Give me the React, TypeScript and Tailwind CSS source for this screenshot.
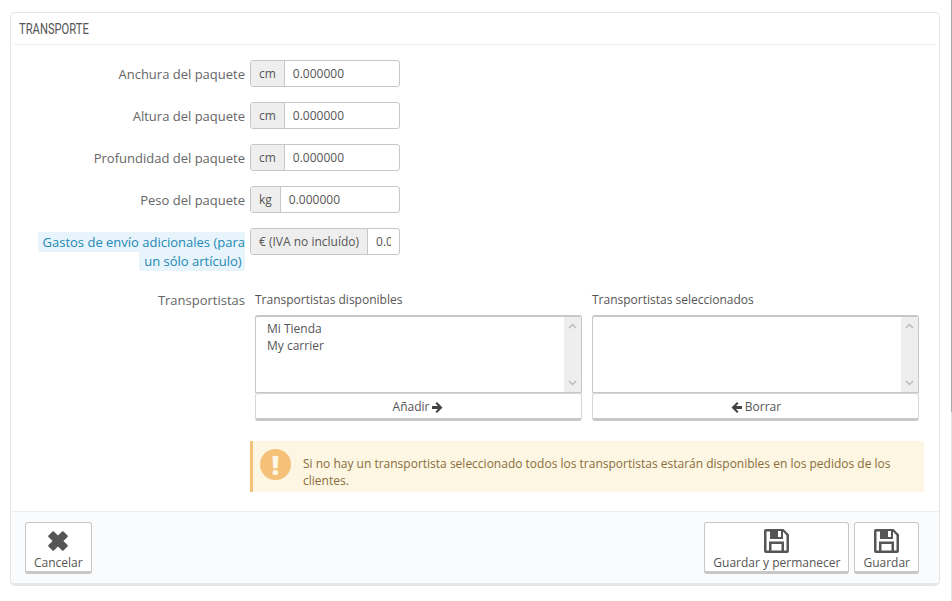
import type { ReactNode } from 'react';

function Floppy() {
    return (
        <svg width="25" height="24" viewBox="0 0 25 24">
            <path
                fillRule="evenodd"
                fill="#555"
                d="M2 0h17.500L25 5.500V22a2 2 0 0 1-2 2H2a2 2 0 0 1-2-2V2a2 2 0 0 1 2-2zM2.500 2.500v19h2.500v-9h15v9h2.500V6.500l-3-3.500H19v7H6V2.500H2.500zM14 2v6h3V2h-3zM7.500 15v6.500h10V15h-10z"
            />
        </svg>
    );
}

function Cross() {
    return (
        <svg width="20" height="20" viewBox="0 0 20 20">
            <path
                fill="#555"
                d="M4.500.5a1 1 0 0 1 1.400 0L10 4.600 14.100.5a1 1 0 0 1 1.400 0l4 4a1 1 0 0 1 0 1.400L15.400 10l4.100 4.100a1 1 0 0 1 0 1.400l-4 4a1 1 0 0 1-1.400 0L10 15.400l-4.100 4.100a1 1 0 0 1-1.400 0l-4-4a1 1 0 0 1 0-1.400L4.600 10 .5 5.900a1 1 0 0 1 0-1.400z"
            />
        </svg>
    );
}

function Field({ label, unit, value = '0.000000' }: { label: string; unit: string; value?: string }) {
    return (
        <div className="flex h-[27px] items-center">
            <label className="w-[234px] pt-[2px] text-right text-[13px] text-[#666]">{label}</label>
            <div className="ml-[5px] flex h-[27px] w-[150px] overflow-hidden rounded-[3px] border border-[#c7c7c7] bg-white text-[12px] text-[#555]">
                <span className="flex items-center border-r border-[#c7c7c7] bg-[#eeeeee] px-[8px]">{unit}</span>
                <span className="flex flex-1 items-center overflow-hidden whitespace-nowrap pl-[8px]">{value}</span>
            </div>
        </div>
    );
}

function Listbox({ items }: { items: string[] }) {
    return (
        <div className="flex h-[78px] overflow-hidden rounded-t-[3px] border border-[#c7c7c7] border-t-2 text-[12px] text-[#555]">
            <div className="flex-1 px-[11px] pt-[3px] leading-[17px]">
                {items.map((item) => (
                    <div key={item}>{item}</div>
                ))}
            </div>
            <div className="flex w-[17px] flex-col items-center justify-between bg-[#eeeeee] py-[6px]">
                <svg width="9" height="6" viewBox="0 0 9 6"><path d="M1 5l3.500-3.500L8 5" fill="none" stroke="#bbb" strokeWidth="1.500" /></svg>
                <svg width="9" height="6" viewBox="0 0 9 6"><path d="M1 1l3.500 3.500L8 1" fill="none" stroke="#bbb" strokeWidth="1.500" /></svg>
            </div>
        </div>
    );
}

function Arrow({ left }: { left?: boolean }) {
    return (
        <svg width="12" height="11" viewBox="0 0 12 11" className={left ? 'rotate-180' : ''}>
            <path d="M0 4h6L3.500 1.500 5 0l5.500 5.500L5 11 3.500 9.500 6 7H0z" fill="#444" />
        </svg>
    );
}

function CarrierColumn({ title, items, children }: { title: string; items: string[]; children: ReactNode }) {
    return (
        <div className="w-[327px]">
            <div className="h-[24px] text-[12px] leading-[18px] text-[#555]">{title}</div>
            <Listbox items={items} />
            <button className="flex h-[28px] w-full items-center justify-center gap-[3px] rounded-[3px] border border-[#d3d8db] border-b-[3px] border-b-[#c7c7c7] bg-white pt-[2px] text-[12px] text-[#555]">
                {children}
            </button>
        </div>
    );
}

function FooterButton({ label, children }: { label: string; children: ReactNode }) {
    return (
        <button className="flex h-[52px] flex-col items-center rounded-[3px] border border-[#c7c7c7] border-b-[3px] bg-white px-[8px] pt-[5px] text-[12px] leading-[16px] text-[#555]">
            <span className="flex h-[26px] items-center">{children}</span>
            <span className="mt-[2px]">{label}</span>
        </button>
    );
}

export default function App() {
    return (
        <div className="flex h-[601px] w-[952px] justify-between overflow-hidden bg-white pl-[10px] pt-[12px] font-['Open_Sans',sans-serif]">
            <section className="flex h-[574px] w-[930px] flex-col rounded-[5px] border border-[#e6e6e6] border-b-[3px] bg-white">
                <h3 className="mx-[3px] h-[32px] border-b border-[#eeeeee] pl-[5px] pt-[7px] font-['Roboto',sans-serif] text-[14px] font-normal leading-[18px] text-[#555]">
                    <span className="inline-block origin-left scale-x-[0.8]">TRANSPORTE</span>
                </h3>

                <div className="flex flex-1 flex-col pt-[15px]">
                    <div className="flex flex-col gap-[15px]">
                        <Field label="Anchura del paquete" unit="cm" />
                        <Field label="Altura del paquete" unit="cm" />
                        <Field label="Profundidad del paquete" unit="cm" />
                        <Field label="Peso del paquete" unit="kg" />
                        <div className="flex items-start">
                            <div className="flex w-[234px] justify-end">
                                <label className="w-[209px] pt-[5px] text-right text-[13px] leading-[19px] text-[#2188b6]">
                                    <span className="rounded-[2px] bg-[#e8f4fb] box-decoration-clone py-[1px] pl-[5px]">
                                        Gastos de envío adicionales (para un sólo artículo){'\u00a0'}
                                    </span>
                                </label>
                            </div>
                            <div className="ml-[5px] flex h-[27px] w-[150px] overflow-hidden rounded-[3px] border border-[#c7c7c7] bg-white text-[12px] text-[#555]">
                                <span className="flex items-center whitespace-nowrap border-r border-[#c7c7c7] bg-[#eeeeee] px-[8px]">€ (IVA no incluído)</span>
                                <span className="ml-[8px] mr-[8px] flex-1 overflow-hidden leading-[25px]">0.000000</span>
                            </div>
                        </div>
                    </div>

                    <div className="mt-[20px] flex">
                        <label className="w-[234px] text-right text-[13px] leading-[18px] text-[#666]">Transportistas</label>
                        <div className="ml-[10px] flex gap-[10px]">
                            <CarrierColumn title="Transportistas disponibles" items={['Mi Tienda', 'My carrier']}>
                                Añadir <Arrow />
                            </CarrierColumn>
                            <CarrierColumn title="Transportistas seleccionados" items={[]}>
                                <Arrow left /> Borrar
                            </CarrierColumn>
                        </div>
                    </div>

                    <div className="ml-[239px] mt-[20px] flex h-[51px] w-[674px] items-start border-l-[3px] border-[#f5c078] bg-[#fcf6e2] pl-[7px] pt-[8px] text-[12px] leading-[17px] text-[#8a6d3b]">
                        <div className="flex h-[31px] w-[31px] shrink-0 items-center justify-center rounded-full bg-[#f5c078] text-[27px] font-extrabold text-[#fcf6e2]">!</div>
                        <p className="ml-[12px] w-[610px] pt-[6px]">
                            Si no hay un transportista seleccionado todos los transportistas estarán disponibles en los pedidos de los clientes.
                        </p>
                    </div>
                </div>

                <footer className="flex h-[72px] items-start justify-between rounded-b-[5px] border-t border-[#eeeeee] bg-[#fafbfc] pl-[14px] pr-[20px] pt-[10px]">
                    <FooterButton label="Cancelar"><Cross /></FooterButton>
                    <div className="flex gap-[5px]">
                        <FooterButton label="Guardar y permanecer"><Floppy /></FooterButton>
                        <FooterButton label="Guardar"><Floppy /></FooterButton>
                    </div>
                </footer>
            </section>

            {/* page scrollbar, only its last pixel column is in the shot */}
            <div className="-mt-[12px] flex h-[601px] w-[1px] flex-col bg-[#e4e4e4]">
                <div className="h-[412px] bg-[#a8a8a8]" />
            </div>
        </div>
    );
}
